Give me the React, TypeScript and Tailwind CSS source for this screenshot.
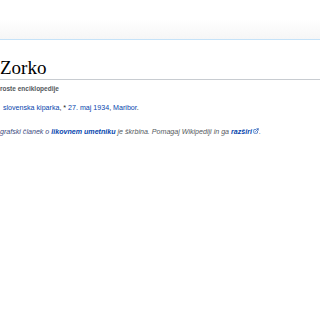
import { ExternalLink } from 'lucide-react'

// Cropped view of a Slovene Wikipedia stub article, rendered at reduced zoom.
export default function App() {
  return (
    <div className="w-[320px] h-[320px] overflow-hidden bg-white font-['Liberation_Sans',Arial,sans-serif] text-[#202122]">
      {/* Header strip: fades to light grey, closed off by the pale blue rule. */}
      <div className="h-[40px] bg-gradient-to-b from-white from-50% to-[#f6f6f6] border-b border-[#c5e2f8]" />

      <div className="pt-[17px]">
        <h1 className="font-['Liberation_Serif','Times_New_Roman',serif] text-[19px] leading-[21px] pb-[1px] border-b border-[#c8ccd1] text-black">
          Zorko
        </h1>
        <div className="mt-[4px] text-[6.5px] font-bold text-[#54595d] leading-[9px]">
          roste enciklopedije
        </div>

        <p className="mt-[10px] text-[7.1px] leading-[10px] pl-[3px]">
          <a className="text-[#0645ad]">slovenska</a>{' '}
          <a className="text-[#0645ad]">kiparka</a>, *{' '}
          <a className="text-[#0645ad]">27. maj</a>{' '}
          <a className="text-[#0645ad]">1934</a>,{' '}
          <a className="text-[#0645ad]">Maribor</a>.
        </p>

        <p className="mt-[14px] text-[7.1px] leading-[10px] italic text-[#54595d]">
          <span className="text-[#3b4a80]">grafski članek o </span>
          <a className="text-[#0645ad] font-bold">likovnem umetniku</a> je škrbina. Pomagaj Wikipediji in ga{' '}
          <a className="text-[#0645ad] font-bold">
            razširi
            <ExternalLink className="inline w-[6px] h-[6px] ml-[1px] align-baseline" strokeWidth={2.5} />
          </a>
          .
        </p>
      </div>
    </div>
  )
}
